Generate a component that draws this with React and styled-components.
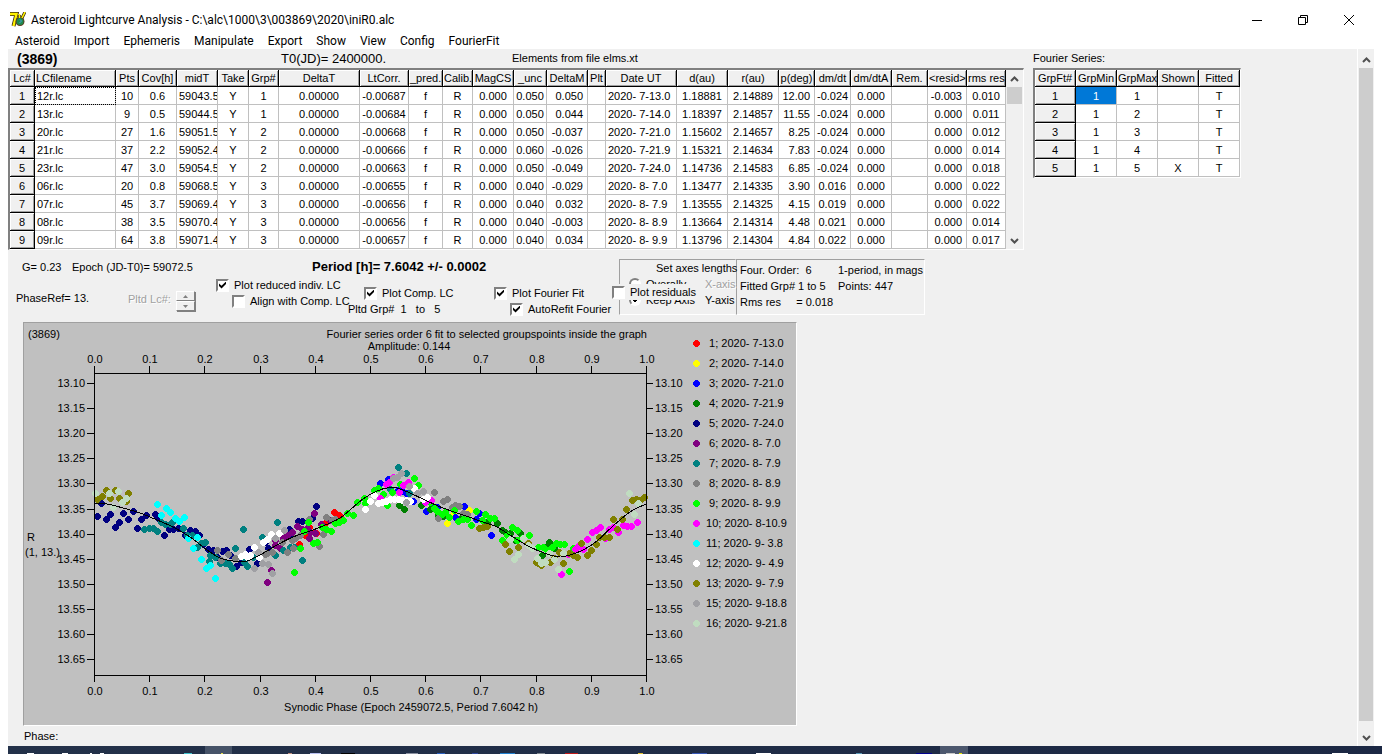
import React from 'react';
import styled, {createGlobalStyle} from 'styled-components';

const GlobalStyle = createGlobalStyle`
	* {
		box-sizing: border-box;
	}
	body {
		margin: 0;
		overflow: hidden;
		background: #fff;
		color: #000;
		font-family: 'Liberation Sans', Arial, sans-serif;
		font-size: 11px;
		line-height: 16px;
	}
	button, input {
		margin: 0;
		padding: 0;
		font: inherit;
		color: inherit;
	}
`

const Window = styled.div`
	display: flex;
	flex-direction: column;
	height: 100vh;
	padding-left: 8px;
`
const TitleBar = styled.header`
	display: flex;
	align-items: center;
	height: 32px;
	padding: 7px 10px 0 2px;
	font-family: Roboto, 'Open Sans', sans-serif;
	font-size: 12px;
`
const Title = styled.h1`
	flex: 1;
	margin: 0 0 0 5px;
	font-size: 12px;
	font-weight: normal;
`
const WindowButton = styled.button`
	width: 46px;
	height: 24px;
	border: 0;
	background: none;

	& svg {
		display: block;
		margin: auto;
	}
`
const MenuBar = styled.nav`
	display: flex;
	height: 17px;
	font-family: Roboto, 'Open Sans', sans-serif;
	font-size: 12px;

	& button {
		padding: 0 7px;
		border: 0;
		background: none;
		line-height: 18px;
	}
`
const Client = styled.main`
	display: flex;
	flex: 1;
	min-height: 0;
	margin-right: 8px;
	background: #f0f0f0;
`
const Content = styled.div`
	flex: 1;
	min-width: 0;
	overflow: hidden;
`
const ScrollBar = styled.div`
	display: flex;
	flex-direction: column;
	width: 17px;
	padding: ${p => p.$outer ? '2px 1px 0' : '0 1px'};
	background: #f0f0f0;
	border-left: ${p => p.$outer ? '1px solid #fff' : '0'};

	& button {
		height: 17px;
		border: 0;
		background: none;
	}
	& svg {
		display: block;
		margin: auto;
	}
`
const Thumb = styled.div`
	flex: ${p => p.$fill ? 1 : '0 0 17px'};
	margin-bottom: ${p => p.$fill ? '8px' : 'auto'};
	background: #cdcdcd;
`

const Grids = styled.section`
	display: flex;
	align-items: flex-start;
	gap: 9px;
`
const GridHead = styled.div`
	display: grid;
	grid-template-columns: 264px 231px auto;
	height: 19px;
	padding-left: 9px;
	line-height: 18px;
`
const GridLabel = styled.div`
	height: 19px;
	line-height: 18px;
`
const Asteroid = styled.strong`
	font-size: 14px;
	line-height: 21px;
`
const Zero = styled.span`
	font-size: 13px;
	line-height: 20px;
`
const Sunken = styled.div`
	display: flex;
	width: max-content;
	border-style: solid;
	border-width: 2px 1px 1px 2px;
	border-color: #808080 #fff #fff #808080;
	background: #fff;
`
const Table = styled.table`
	width: ${p => p.$width}px;
	table-layout: fixed;
	border-spacing: 0;

	& th, & td {
		height: 18px;
		padding: 0 2px;
		overflow: hidden;
		border: solid #c0c0c0;
		border-width: 0 1px 1px 0;
		font-weight: normal;
		line-height: 16px;
		white-space: pre;
	}
	& th {
		background: #f0f0f0;
		border-color: #000;
		box-shadow: inset 1px 1px #fff, inset -1px -1px #a0a0a0;
	}
	& thead th {
		height: 17px;
		padding: 0 1px;
	}
`
const Cell = styled.td`
	text-align: ${p => p.$align || 'center'};
	&& {
		padding-right: ${p => p.$align === 'right' ? '4px' : '2px'};
		background: ${p => p.$selected ? '#0078d7' : '#fff'};
		color: ${p => p.$selected ? '#fff' : '#000'};
		outline: ${p => p.$focused ? '1px dotted #000' : 'none'};
		outline-offset: -1px;
	}
`

const Controls = styled.section`
	display: flex;
	align-items: flex-start;
	height: 72px;
	padding-top: 9px;
`
const Settings = styled.div`
	width: 611px;
`
const Summary = styled.div`
	display: grid;
	grid-template-columns: 50px 240px auto;
	height: 18px;
	padding-left: 14px;

	& strong {
		font-size: 13px;
	}
`
const Options = styled.div`
	display: grid;
	grid-template-columns: 112px 88px 132px 146px auto;
	padding-left: 8px;
`
const Stack = styled.div`
	display: flex;
	flex-direction: column;
	padding-top: ${p => p.$top || 0}px;
	white-space: pre;
`
const Check = styled.label`
	display: flex;
	align-items: center;
	gap: 5px;
	height: 16px;
	margin-left: ${p => p.$indent ? '16px' : '0'};
	white-space: nowrap;

	& input {
		appearance: none;
		display: grid;
		flex: none;
		place-content: center;
		width: 13px;
		height: 13px;
		border: 2px solid;
		border-color: #808080 #fff #fff #808080;
		background: #fff;
	}
	& input:checked::after {
		content: '';
		width: 7px;
		height: 7px;
		background: #000;
		clip-path: polygon(0 29%, 36% 62%, 100% 0, 100% 36%, 36% 100%, 0 64%);
	}
`
const Disabled = styled.span`
	color: #a0a0a0;
	text-shadow: 1px 1px #fff;
`
const Spin = styled.div`
	display: flex;
	align-items: flex-start;
	gap: 5px;
	padding-top: 14px;
	white-space: nowrap;

	& > div {
		display: grid;
		width: 19px;
	}
	& button {
		height: 10px;
		border: 1px solid;
		border-color: #fff #808080 #808080 #fff;
		background: #f0f0f0;
		box-shadow: 1px 1px #808080;
	}
	& svg {
		display: block;
		margin: auto;
	}
`
const AxesPanel = styled.fieldset`
	position: relative;
	display: grid;
	grid-template-columns: 1fr 30px;
	grid-auto-rows: 16px;
	width: 117px;
	height: 56px;
	margin: 0;
	padding: 0 0 0 9px;
	border: 1px solid;
	border-color: #a0a0a0 transparent #fff #a0a0a0;
	overflow: visible;
	white-space: nowrap;

	& > div:first-child {
		grid-column: 1 / 3;
		padding-left: 27px;
	}
	& > label {
		display: flex;
		align-items: center;
		gap: 5px;
	}
	& input[type='radio'] {
		appearance: none;
		flex: none;
		width: 12px;
		height: 12px;
		border: 2px solid;
		border-color: #808080 #fff #fff #808080;
		border-radius: 50%;
		background: #fff;
	}
	& input[type='radio']:checked {
		background: radial-gradient(#000 2px, #fff 2px);
	}
`
const Residuals = styled.div`
	position: absolute;
	top: 24px;
	left: -8px;
	width: 88px;
	background: #f0f0f0;
`
const FitPanel = styled.div`
	display: grid;
	grid-template-columns: 98px auto;
	grid-auto-rows: 16px;
	width: 189px;
	height: 56px;
	padding: 2px 0 0 3px;
	border: 1px solid;
	border-color: #a0a0a0 #fff #fff #a0a0a0;
	white-space: pre;
`

const ChartPanel = styled.section`
	display: flex;
	width: 774px;
	margin-left: 15px;
	border: 1px solid;
	border-color: #a0a0a0 #fff #fff #a0a0a0;
	background: #c0c0c0;

	& > svg {
		display: block;
		flex: none;
	}
`
const Legend = styled.ul`
	margin: 0;
	padding: 10px 0 0 2px;
	list-style: none;

	& li {
		display: flex;
		align-items: center;
		gap: 3px;
		height: 20px;
		white-space: pre;
	}
	& svg {
		display: block;
	}
`
const Status = styled.div`
	padding: 2px 0 0 16px;
`
const TaskBar = styled.footer`
	height: 8px;
	background: linear-gradient(90deg, #233149, #1c2844);
	overflow: hidden;

	& svg {
		display: block;
	}
`

const menus = ['Asteroid', 'Import', 'Ephemeris', 'Manipulate', 'Export', 'Show', 'View', 'Config', 'FourierFit'];

const lcColumns = [
	{name: 'LCfilename', width: 81, align: 'left'},
	{name: 'Pts', width: 23},
	{name: 'Cov[h]', width: 38},
	{name: 'midT', width: 41, align: 'left'},
	{name: 'Take', width: 31},
	{name: 'Grp#', width: 30},
	{name: 'DeltaT', width: 81},
	{name: 'LtCorr.', width: 49},
	{name: '_pred.', width: 34},
	{name: 'Calib.', width: 30},
	{name: 'MagCS', width: 41},
	{name: '_unc', width: 33},
	{name: 'DeltaM', width: 41, align: 'right'},
	{name: 'Plt', width: 18},
	{name: 'Date UT', width: 71, align: 'left'},
	{name: 'd(au)', width: 51},
	{name: 'r(au)', width: 51},
	{name: 'p(deg)', width: 36, align: 'right'},
	{name: 'dm/dt', width: 36, align: 'right'},
	{name: 'dm/dtA', width: 41},
	{name: 'Rem.', width: 36},
	{name: '<resid>', width: 39, align: 'right'},
	{name: 'rms res', width: 39},
];

const lcRows = [
	['12r.lc', '10', '0.6', '59043.5', 'Y', '1', '0.00000', '-0.00687', 'f', 'R', '0.000', '0.050', '0.050', '', '2020- 7-13.0', '1.18881', '2.14889', '12.00', '-0.024', '0.000', '', '-0.003', '0.010'],
	['13r.lc', '9', '0.5', '59044.5', 'Y', '1', '0.00000', '-0.00684', 'f', 'R', '0.000', '0.050', '0.044', '', '2020- 7-14.0', '1.18397', '2.14857', '11.55', '-0.024', '0.000', '', '0.000', '0.011'],
	['20r.lc', '27', '1.6', '59051.5', 'Y', '2', '0.00000', '-0.00668', 'f', 'R', '0.000', '0.050', '-0.037', '', '2020- 7-21.0', '1.15602', '2.14657', '8.25', '-0.024', '0.000', '', '0.000', '0.012'],
	['21r.lc', '37', '2.2', '59052.4', 'Y', '2', '0.00000', '-0.00666', 'f', 'R', '0.000', '0.060', '-0.026', '', '2020- 7-21.9', '1.15321', '2.14634', '7.83', '-0.024', '0.000', '', '0.000', '0.014'],
	['23r.lc', '47', '3.0', '59054.5', 'Y', '2', '0.00000', '-0.00663', 'f', 'R', '0.000', '0.050', '-0.049', '', '2020- 7-24.0', '1.14736', '2.14583', '6.85', '-0.024', '0.000', '', '0.000', '0.018'],
	['06r.lc', '20', '0.8', '59068.5', 'Y', '3', '0.00000', '-0.00655', 'f', 'R', '0.000', '0.040', '-0.029', '', '2020- 8- 7.0', '1.13477', '2.14335', '3.90', '0.016', '0.000', '', '0.000', '0.022'],
	['07r.lc', '45', '3.7', '59069.4', 'Y', '3', '0.00000', '-0.00656', 'f', 'R', '0.000', '0.040', '0.032', '', '2020- 8- 7.9', '1.13555', '2.14325', '4.15', '0.019', '0.000', '', '0.000', '0.022'],
	['08r.lc', '38', '3.5', '59070.4', 'Y', '3', '0.00000', '-0.00656', 'f', 'R', '0.000', '0.040', '-0.003', '', '2020- 8- 8.9', '1.13664', '2.14314', '4.48', '0.021', '0.000', '', '0.000', '0.014'],
	['09r.lc', '64', '3.8', '59071.4', 'Y', '3', '0.00000', '-0.00657', 'f', 'R', '0.000', '0.040', '0.034', '', '2020- 8- 9.9', '1.13796', '2.14304', '4.84', '0.022', '0.000', '', '0.000', '0.017'],
];

const ftColumns = ['GrpMin', 'GrpMax', 'Shown', 'Fitted'].map(name => ({name, width: 41}));
const ftRows = [
	['1', '1', '', 'T'],
	['1', '2', '', 'T'],
	['1', '3', '', 'T'],
	['1', '4', '', 'T'],
	['1', '5', 'X', 'T'],
];

// points are x, y pairs measured from the top left corner of the plot frame
const series = [
	{label: '  1; 2020- 7-13.0', color: '#ff0000', points: '240,139 245,142 243,143 246,143 232,149 215,154 211,162 220,159 205,171 222,160'},
	{label: '  2; 2020- 7-14.0', color: '#ffff00', points: '375,137 353,150 359,141'},
	{label: '  3; 2020- 7-21.0', color: '#0000ff', points: '286,110 294,106 304,117 308,118 312,120 319,128 332,138 339,134 343,134 370,133 361,144 382,146 385,140 397,162'},
	{label: '  4; 2020- 7-21.9', color: '#008000', points: '305,132 310,136 327,132 336,136 344,142 349,143 368,144 393,149 403,150 408,157 411,159 416,160 421,167 426,160 448,182 455,169 460,175 451,174'},
	{label: '  5; 2020- 7-24.0', color: '#000080', points: '7,130 3,143 12,146 16,141 29,140 25,149 21,154 34,146 39,138 47,146 52,142 61,141 43,155 70,162 64,145 75,156 79,156 84,155 91,162 96,157 101,158 105,162 109,171 114,176 119,177 123,184 128,178 132,177 136,182 142,193 147,189 155,176 163,190 171,169 174,175 204,148 208,148 195,156 222,133 218,145 199,164'},
	{label: '  6; 2020- 8- 7.0', color: '#800080', points: '220,140 203,153 198,159 193,162 189,165 181,167 181,172 186,175 177,197 173,209 215,165 208,156 213,155 216,159 221,160 227,151 236,147'},
	{label: '  7; 2020- 8- 7.9', color: '#008080', points: '50,156 55,155 59,155 63,158 67,149 71,151 76,151 78,149 89,155 93,162 98,162 103,174 107,170 111,169 116,182 121,184 126,190 131,190 135,191 138,195 115,188 141,175 149,156 168,164 183,149 153,193 150,189 181,182 208,187 196,174 200,174 189,177 159,184 304,94 312,100 296,116 315,120'},
	{label: '  8; 2020- 8- 8.9', color: '#808080', points: '123,177 134,181 127,187 141,185 173,180 178,179 171,181 193,179 188,169 198,167 199,175 201,165 215,146 232,144 241,146 238,147 229,161 225,173 206,162 340,119 349,128 353,126 361,132 365,133 369,140 344,145 358,134 373,141'},
	{label: '  9; 2020- 8- 9.9', color: '#00ff00', points: '214,149 210,158 206,175 200,199 219,170 223,169 228,154 232,156 237,158 241,150 245,149 249,147 253,140 259,142 263,129 271,130 270,125 280,117 284,115 289,121 293,132 298,119 306,111 320,105 324,112 336,129 340,135 343,138 348,141 351,139 360,137 355,144 364,148 369,146 373,146 377,152 382,138 391,141 396,145 400,145 388,147 418,154 423,157 408,167 413,162 435,162 428,165 444,174 449,174 453,177 462,170 466,171 470,171 475,198 458,174 423,167 479,175'},
	{label: ' 10; 2020- 8-10.9', color: '#ff00ff', points: '292,111 295,109 299,104 286,125 305,119 309,112 314,109 331,129 337,127 506,154 498,159 502,157 493,166 484,173 481,176 489,176 474,181 515,156 524,159 529,152 533,153 537,153 543,149 511,165 467,201 519,154'},
	{label: ' 11; 2020- 9- 3.8', color: '#00ffff', points: '63,131 72,135 76,139 67,142 81,145 85,148 90,144 94,165 103,164 99,175 107,186 112,195 116,192 121,205'},
	{label: ' 12; 2020- 9- 4.9', color: '#ffffff', points: '177,161 185,160 173,166 169,169 160,174 147,183 151,181 156,182 165,184 153,184 271,136 276,128 280,122 284,130 288,129 292,128 296,126 300,126 304,126 308,127 312,127 316,128 320,115 333,124 329,126'},
	{label: ' 13; 2020- 9- 7.9', color: '#808000', points: '12,117 21,117 34,120 8,123 3,126 16,125 25,125 32,128 385,155 389,154 393,153 411,171 415,178 424,174 434,170 442,189 447,192 444,190 456,189 460,185 465,179 469,190 475,180 479,182 483,184 487,170 493,182 497,177 502,171 505,164 510,164 515,164 523,156 519,146 528,146 532,136 538,127 542,126 546,127 550,124'},
	{label: ' 15; 2020- 9-18.8', color: '#a0a0a4', points: '164,179 160,195 168,190 174,191 178,200 181,165 190,157 299,105 303,104 307,100 315,113 323,120 329,118 312,129'},
	{label: ' 16; 2020- 9-21.8', color: '#c0dcc0', points: '1,120 15,120 24,118 32,125 28,129 19,134 416,166 420,186 424,181 429,165 434,172 438,175 443,185 447,190 451,189 455,180 460,186 464,196 469,180 535,120 544,130 540,141'},
];

const curve = [
	[0, 131], [13, 131], [29, 135], [46, 140], [63, 147], [79, 154], [96, 164], [113, 177], [126, 185], [139, 188],
	[153, 188], [166, 182], [183, 172], [199, 164], [219, 157], [236, 150], [246, 145], [256, 137], [269, 126],
	[283, 118], [293, 115], [303, 115], [316, 120], [333, 128], [349, 135], [369, 142], [389, 149], [403, 154],
	[419, 164], [436, 174], [453, 181], [466, 184], [476, 182], [489, 177], [503, 168], [519, 153], [536, 139], [552, 131],
];

const toPairs = (points) => points.split(' ').map(p => p.split(',').map(Number));

const smooth = (pts) => {
	let d = `M${pts[0].join(' ')}`;
	for (let i = 0; i < pts.length-1; i++) {
		const p0 = pts[i-1] || pts[i];
		const p1 = pts[i];
		const p2 = pts[i+1];
		const p3 = pts[i+2] || p2;
		d += `C${p1[0]+(p2[0]-p0[0])/6} ${p1[1]+(p2[1]-p0[1])/6} ${p2[0]-(p3[0]-p1[0])/6} ${p2[1]-(p3[1]-p1[1])/6} ${p2[0]} ${p2[1]}`;
	}
	return d;
}

const Dot = ({x, y, color}) => (
	<path d={`M${x-1} ${y-3}h3v1h1v1h1v3h-1v1h-1v1h-3v-1h-1v-1h-1v-3h1v-1h1z`} fill={color} />
)

const Arrow = ({down}) => (
	<svg width='9' height='6' viewBox='0 0 9 6'>
		<path d={down ? 'M1 1l3.5 3.5l3.5 -3.5' : 'M1 5l3.5 -3.5l3.5 3.5'} fill='none' stroke='#505050' strokeWidth='2'/>
	</svg>
)

const Scroll = ({outer}) => (
	<ScrollBar $outer={outer}>
		<button aria-label='Scroll up'><Arrow /></button>
		<Thumb $fill={outer} />
		<button aria-label='Scroll down'><Arrow down /></button>
	</ScrollBar>
)

const DataTable = ({corner, cornerWidth, columns, rows, selected, focused}) => {
	const width = columns.reduce((sum, c) => sum+c.width, cornerWidth);
	return (
		<Table $width={width}>
			<colgroup>
				<col style={{width: cornerWidth}} />
				{columns.map(c => <col key={c.name} style={{width: c.width}} />)}
			</colgroup>
			<thead>
				<tr>
					<th>{corner}</th>
					{columns.map(c => <th key={c.name} style={{textAlign: c.name === 'LCfilename' ? 'left' : 'center'}}>{c.name}</th>)}
				</tr>
			</thead>
			<tbody>
				{rows.map((row, r) => (
					<tr key={r}>
						<th>{r+1}</th>
						{row.map((value, i) => (
							<Cell
								key={i}
								$align={columns[i].align}
								$selected={selected && r === 0 && i === 0}
								$focused={focused && r === 0 && i === 0}
							>{value}</Cell>
						))}
					</tr>
				))}
			</tbody>
		</Table>
	);
}

const Chart = () => {
	const phases = Array.from({length: 11}, (_, i) => i);
	const mags = Array.from({length: 12}, (_, i) => i);
	return (
		<svg width='667' height='402' viewBox='-70 -50 667 402' role='img' aria-label='Lightcurve'>
			<text x='-66' y='-35'>(3869)</text>
			<text x='553' y='-35' textAnchor='end'>Fourier series order 6 fit to selected groupspoints inside the graph</text>
			<text x='315' y='-23' textAnchor='middle'>Amplitude: 0.144</text>
			<text x='-67' y='168'>R</text>
			<text x='-69' y='183'>(1, 13.)</text>
			<g shapeRendering='crispEdges'>
				{series.map(s => toPairs(s.points).map(([x, y], i) => (
					<Dot key={s.label+i} x={x} y={y} color={s.color} />
				)))}
				<path d={smooth(curve)} fill='none' stroke='#000' />
				<rect x='0.5' y='0.5' width='552' height='302' fill='none' stroke='#000' />
			</g>
			{phases.map(i => {
				const x = Math.round(i*55.2);
				return (
					<g key={i}>
						<path d={`M${x+.5} -7V0M${x+.5} 303V309`} stroke='#000' />
						<text x={x+1} y='-10' textAnchor='middle'>{(i/10).toFixed(1)}</text>
						<text x={x+1} y='322' textAnchor='middle'>{(i/10).toFixed(1)}</text>
					</g>
				);
			})}
			{mags.map(i => {
				const y = 10+Math.round(i*25.1);
				return (
					<g key={i}>
						<path d={`M-7 ${y+.5}H0M553 ${y+.5}H559`} stroke='#000' />
						<text x='-9' y={y+4} textAnchor='end'>{(13.1+i*.05).toFixed(2)}</text>
						<text x='561' y={y+4}>{(13.1+i*.05).toFixed(2)}</text>
					</g>
				);
			})}
			<text x='317' y='338' textAnchor='middle'>Synodic Phase (Epoch 2459072.5, Period 7.6042 h)</text>
		</svg>
	);
}

const AppIcon = () => (
	<svg width='16' height='16' viewBox='0 0 16 16'>
		<path d='M0 2h6.5L3.5 14' fill='none' stroke='#3a2a10' strokeWidth='4' />
		<path d='M0 2h6.5L3.5 14' fill='none' stroke='#fff200' strokeWidth='2.4' />
		<circle cx='10' cy='9.5' r='4.5' fill='#5a3a1a' />
		<circle cx='10' cy='9.5' r='3.5' fill='#1f8a50' />
		<path d='M10 7.5l1.5 1.5l-2 2' fill='none' stroke='#4aa0d8' />
		<path d='M9.5 3v3M15 0l-3 6' fill='none' stroke='#3a2a10' strokeWidth='3' />
		<path d='M9.5 2v4M15 0l-3 6' fill='none' stroke='#fff200' strokeWidth='1.6' />
	</svg>
)

const TaskIcons = () => (
	<svg width='1374' height='8' shapeRendering='crispEdges'>
		<rect x='197' width='27' height='8' fill='#465368' />
		<rect x='932' width='28' height='8' fill='#4d586e' />
		{[[19, 7, '#fff'], [54, 6, '#fff'], [82, 2, '#fff'], [92, 4, '#fff'], [176, 8, '#40c4d0'], [213, 2, '#e8e04a'],
			[280, 4, '#c09080'], [302, 11, '#b8c0f0'], [333, 14, '#000'], [398, 12, '#8a90a0'], [429, 8, '#2a60c0'],
			[464, 6, '#3048a0'], [492, 15, '#2080d0'], [529, 8, '#808890'], [557, 13, '#c01818'], [630, 5, '#e0c030'],
			[684, 15, '#3858b8'], [748, 15, '#fff'], [848, 6, '#5a9ab8'], [908, 16, '#000090'], [938, 9, '#c8c8c8'],
			[951, 3, '#e8e800'], [1324, 16, '#fff']].map(([x, w, fill]) => (
			<rect key={x} x={x} y='7' width={w} height='1' fill={fill} />
		))}
	</svg>
)

const App = () => {
	return (
		<>
		<GlobalStyle />
		<Window>
			<TitleBar>
				<AppIcon />
				<Title>Asteroid Lightcurve Analysis - C:\alc\1000\3\003869\2020\iniR0.alc</Title>
				<WindowButton aria-label='Minimize'>
					<svg width='10' height='10'><path d='M0 5.5h10' stroke='#000' /></svg>
				</WindowButton>
				<WindowButton aria-label='Restore'>
					<svg width='10' height='10' fill='none' stroke='#000'><path d='M.5 2.5h7v7h-7zM2.5 2V.5h7v7H8' /></svg>
				</WindowButton>
				<WindowButton aria-label='Close'>
					<svg width='10' height='10'><path d='M0 0l10 10M10 0l-10 10' stroke='#000' /></svg>
				</WindowButton>
			</TitleBar>
			<MenuBar>
				{menus.map(m => <button key={m}>{m}</button>)}
			</MenuBar>
			<Client>
				<Content>
					<Grids>
						<div>
							<GridHead>
								<Asteroid>(3869)</Asteroid>
								<Zero>T0(JD)= 2400000.</Zero>
								<span>Elements from file elms.xt</span>
							</GridHead>
							<Sunken>
								<DataTable corner='Lc#' cornerWidth={25} columns={lcColumns} rows={lcRows} focused />
								<Scroll />
							</Sunken>
						</div>
						<div>
							<GridLabel>Fourier Series:</GridLabel>
							<Sunken>
								<DataTable corner='GrpFt#' cornerWidth={41} columns={ftColumns} rows={ftRows} selected />
							</Sunken>
						</div>
					</Grids>
					<Controls>
						<Settings>
							<Summary>
								<span>G= 0.23</span>
								<span>Epoch (JD-T0)= 59072.5</span>
								<strong>Period [h]= 7.6042 +/- 0.0002</strong>
							</Summary>
							<Options>
								<Stack $top={13}>PhaseRef= 13.</Stack>
								<Spin>
									<Disabled>Pltd Lc#:</Disabled>
									<div>
										<button disabled aria-label='Next'><svg width='5' height='3'><path d='M0 3l2.5 -3l2.5 3z' fill='#808080' /></svg></button>
										<button disabled aria-label='Previous'><svg width='5' height='3'><path d='M0 0l2.5 3l2.5 -3z' fill='#808080' /></svg></button>
									</div>
								</Spin>
								<Stack>
									<Check><input type='checkbox' defaultChecked />Plot reduced indiv. LC</Check>
									<Check $indent><input type='checkbox' />Align with Comp. LC</Check>
								</Stack>
								<Stack $top={8}>
									<Check $indent><input type='checkbox' defaultChecked />Plot Comp. LC</Check>
									<span>Pltd Grp#  1   to   5</span>
								</Stack>
								<Stack $top={8}>
									<Check><input type='checkbox' defaultChecked />Plot Fourier Fit</Check>
									<Check $indent><input type='checkbox' defaultChecked />AutoRefit Fourier</Check>
								</Stack>
							</Options>
						</Settings>
						<AxesPanel>
							<div>Set axes lengths</div>
							<label><input type='radio' name='axes' />Overally</label>
							<Disabled>X-axis</Disabled>
							<label><input type='radio' name='axes' defaultChecked />Keep Axis</label>
							<span>Y-axis</span>
							<Residuals>
								<Check><input type='checkbox' />Plot residuals</Check>
							</Residuals>
						</AxesPanel>
						<FitPanel>
							<span>Four. Order:  6</span>
							<span>1-period, in mags</span>
							<span>Fitted Grp# 1 to 5</span>
							<span>Points: 447</span>
							<span>Rms res     = 0.018</span>
						</FitPanel>
					</Controls>
					<ChartPanel>
						<Chart />
						<Legend>
							{series.map(s => (
								<li key={s.label}>
									<svg width='7' height='7' viewBox='-3 -3 7 7' shapeRendering='crispEdges'><Dot x={0} y={0} color={s.color} /></svg>
									{s.label}
								</li>
							))}
						</Legend>
					</ChartPanel>
					<Status>
						<div>Phase:</div>
						<div>Mag:</div>
					</Status>
				</Content>
				<Scroll outer />
			</Client>
			<TaskBar><TaskIcons /></TaskBar>
		</Window>
		</>
	);
}

export default App;
